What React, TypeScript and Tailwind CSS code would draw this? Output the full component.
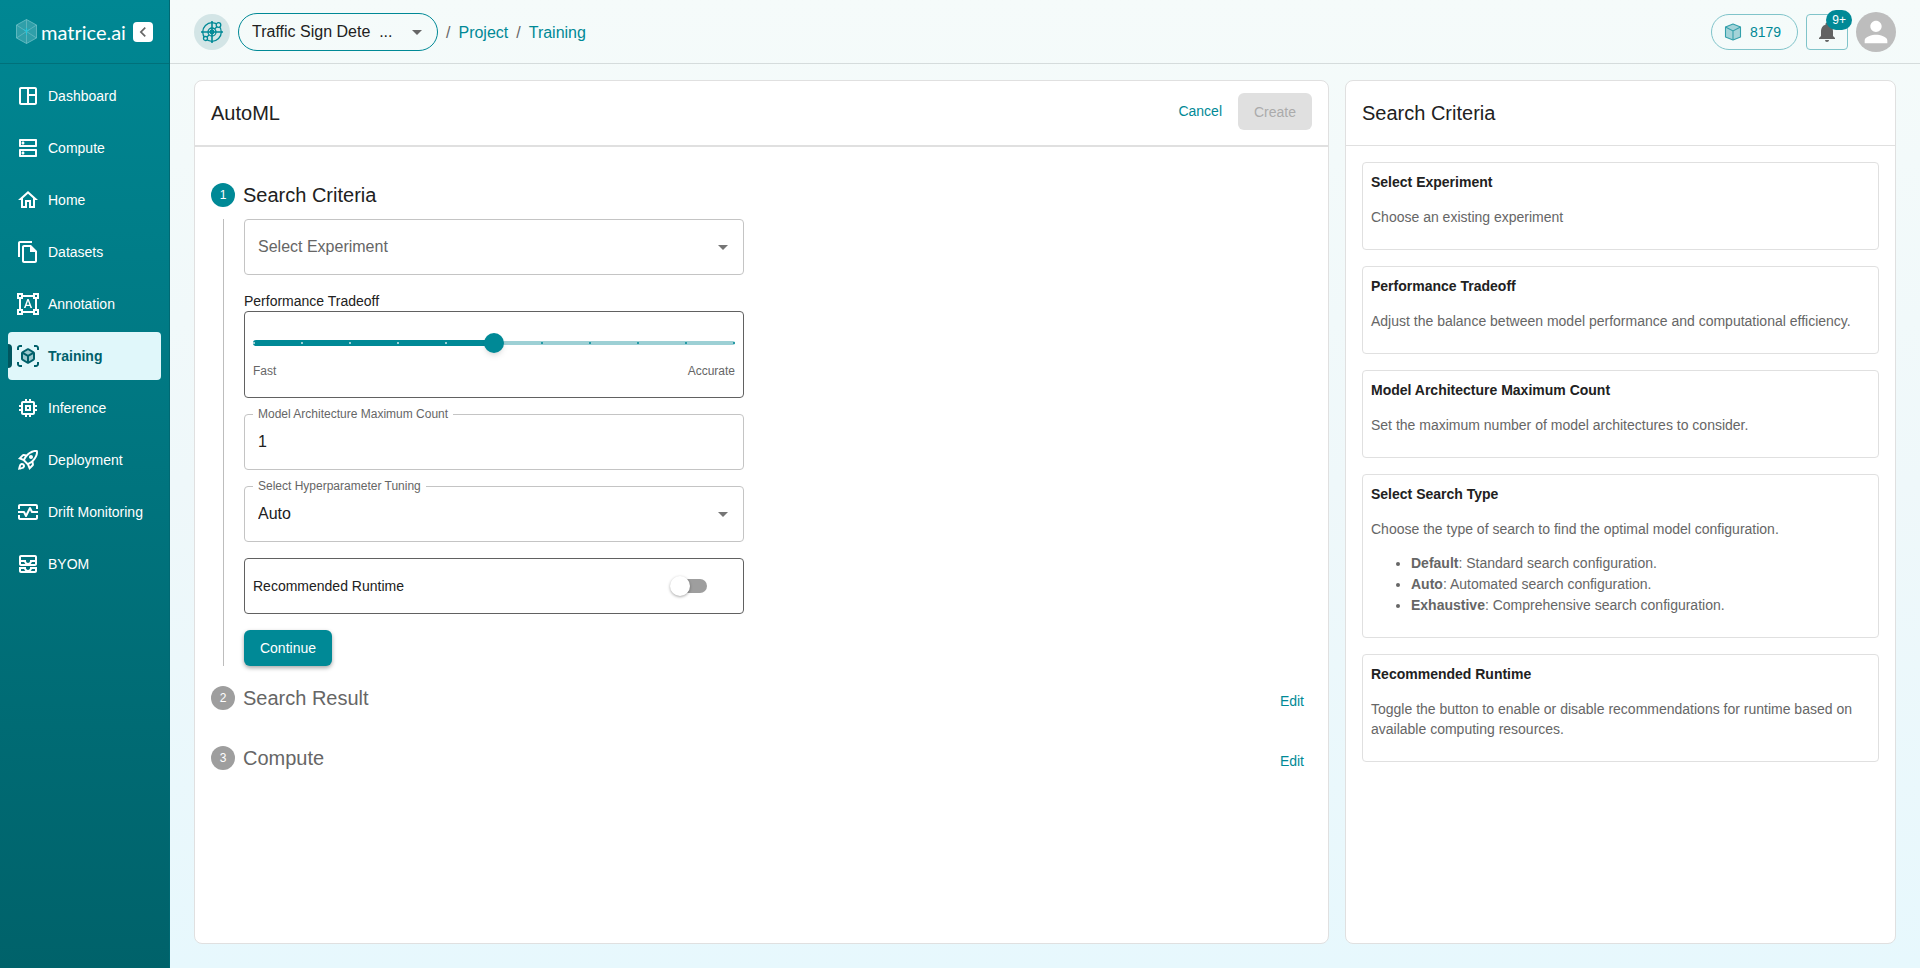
import React, { useState } from "react";
import {
  MdOutlineSpaceDashboard,
  MdOutlineDns,
  MdOutlineHome,
  MdOutlineFileCopy,
  MdOutlineFormatShapes,
  MdOutlineViewInAr,
  MdMemory,
  MdOutlineRocketLaunch,
  MdOutlineMonitorHeart,
  MdOutlineAllInbox,
  MdNotifications,
  MdChevronLeft,
  MdArrowDropDown,
  MdPerson,
} from "react-icons/md";

function LogoMark() {
  return (
    <svg width="21" height="25" viewBox="0 0 21 25" fill="none" className="shrink-0">
      <path d="M10.500 .5 20.500 6v13l-10 5.500L.5 19V6z" fill="#4fb0b9" fillOpacity=".6" stroke="#6fc0c7" strokeWidth=".8" />
      <path d="M.5 6 10.500 12.500 20.500 6M10.500 .5v24M.5 19l10-6.500 10 6.500" stroke="#a5d8dc" strokeOpacity=".55" strokeWidth=".7" />
      <path d="M10.500 9v7M7.500 10.500l3 2 3-2" stroke="#26c6da" strokeWidth="1" />
    </svg>
  );
}

function TargetIcon() {
  return (
    <svg width="22" height="22" viewBox="0 0 22 22" fill="none" stroke="#008996" strokeWidth="1.300">
      <circle cx="11" cy="11" r="9.300" />
      <circle cx="11" cy="11" r="4" />
      <circle cx="11" cy="11" r="1.800" />
      <path d="M11 0v22M0 11h22" strokeWidth="1.600" />
      <circle cx="17.500" cy="4" r="2.300" fill="#d3e7e8" />
      <circle cx="4.500" cy="17.500" r="2" fill="#d3e7e8" />
      <path d="M16 5.700 13.500 8M6 16l2-2" />
    </svg>
  );
}

function CubeIcon() {
  return (
    <svg width="18" height="18" viewBox="0 0 18 18" fill="none">
      <path d="M9 1 16.500 4v10L9 17 1.500 14V4z" fill="#a3d3d8" stroke="#33a0ab" strokeWidth="1.100" strokeLinejoin="round" />
      <path d="M1.500 4 9 8l7.500-4M9 8v9" stroke="#33a0ab" strokeWidth="1.100" />
    </svg>
  );
}

function TrainingIcon() {
  return (
    <span className="relative block size-6">
      <svg viewBox="0 0 24 24" className="absolute inset-0 size-6">
        <path d="M12 6l5 3v6l-5 3-5-3V9z" fill="#00606a" fillOpacity=".3" />
      </svg>
      <MdOutlineViewInAr className="relative size-6" />
    </span>
  );
}

const navItems = [
  { label: "Dashboard", icon: <MdOutlineSpaceDashboard className="size-6" /> },
  { label: "Compute", icon: <MdOutlineDns className="size-6" /> },
  { label: "Home", icon: <MdOutlineHome className="size-6" /> },
  { label: "Datasets", icon: <MdOutlineFileCopy className="size-6" /> },
  { label: "Annotation", icon: <MdOutlineFormatShapes className="size-6" /> },
  { label: "Training", icon: <TrainingIcon />, active: true },
  { label: "Inference", icon: <MdMemory className="size-6" /> },
  { label: "Deployment", icon: <MdOutlineRocketLaunch className="size-6" /> },
  { label: "Drift Monitoring", icon: <MdOutlineMonitorHeart className="size-6" /> },
  { label: "BYOM", icon: <MdOutlineAllInbox className="size-6" /> },
];

function Sidebar() {
  return (
    <aside className="flex w-[170px] shrink-0 flex-col border-r border-[#006973] bg-linear-to-b from-[#008793] to-[#00626a]">
      <div className="flex h-16 items-center border-b border-black/15 pl-4">
        <LogoMark />
        <span className="ml-1 w-[88px] font-['Lato',sans-serif] text-xl/6 text-white">matrice.ai</span>
        <button aria-label="Collapse menu" className="ml-1 flex size-5 items-center justify-center rounded bg-white text-[#666]">
          <MdChevronLeft className="size-5" />
        </button>
      </div>
      <nav className="flex flex-col gap-1 px-2 py-2">
        {navItems.map((item) => (
          <a
            key={item.label}
            href="#"
            className={
              item.active
                ? "relative flex h-12 items-center gap-2 rounded bg-[#e0f7fa] pl-2 text-sm font-bold text-[#00606a]"
                : "flex h-12 items-center gap-2 rounded pl-2 text-sm text-white"
            }
          >
            {item.active && <span className="absolute top-3 left-0 h-6 w-1 rounded-r bg-[#00565f]" />}
            {item.icon}
            <span className="whitespace-nowrap">{item.label}</span>
          </a>
        ))}
      </nav>
    </aside>
  );
}

function Header() {
  return (
    <header className="flex h-16 items-center justify-between border-b border-[#d5dcdc] px-6">
      <div className="flex items-center gap-2">
        <span className="flex size-9 items-center justify-center rounded-full bg-[#d3e5e6]">
          <TargetIcon />
        </span>
        <div className="relative">
          <select
            aria-label="Project"
            className="block h-[38px] w-[200px] appearance-none rounded-full border border-[#008996] bg-transparent pr-10 pl-[13px] text-base text-[#212121]"
          >
            <option>Traffic Sign Dete&nbsp; ...</option>
          </select>
          <MdArrowDropDown className="pointer-events-none absolute top-[7px] right-[9px] size-6 text-[#666]" />
        </div>
        <nav className="flex items-center gap-2 pt-0.5 text-base text-[#666]">
          <span>/</span>
          <a href="#" className="text-[#008996]">Project</a>
          <span>/</span>
          <a href="#" className="text-[#008996]">Training</a>
        </nav>
      </div>
      <div className="flex items-center gap-2">
        <button className="flex h-9 w-[87px] items-center gap-2 rounded-full border border-[#80c4ca] px-3 text-sm text-[#008996]">
          <CubeIcon />
          <span>8179</span>
        </button>
        <button aria-label="Notifications" className="relative flex h-9 w-[42px] items-center justify-center rounded border border-[#80c4ca] text-[#636363]">
          <MdNotifications className="size-6" />
          <span className="absolute -top-[5px] -right-[5px] flex h-5 items-center rounded-full bg-[#008996] px-1.5 text-xs text-white">9+</span>
        </button>
        <button aria-label="Account" className="flex size-10 items-center justify-center rounded-full bg-[#bdbdbd] text-white">
          <MdPerson className="size-[34px]" />
        </button>
      </div>
    </header>
  );
}

function StepTitle({ n, title, active }: { n: number; title: string; active?: boolean }) {
  return (
    <div className="flex h-8 items-center gap-2">
      <span
        className={
          active
            ? "flex size-6 items-center justify-center rounded-full bg-[#008996] text-xs text-white"
            : "flex size-6 items-center justify-center rounded-full bg-[#9e9e9e] text-xs text-white"
        }
      >
        {n}
      </span>
      <h3 className={active ? "text-xl text-[#212121]" : "text-xl text-[#666]"}>{title}</h3>
    </div>
  );
}

function PerformanceSlider() {
  const [value, setValue] = useState(5);
  return (
    <div className="relative flex h-5 items-center">
      <div className="absolute inset-x-0 h-1 rounded-full bg-[#9dd0d5]" />
      <div className="absolute left-0 h-1.5 rounded-full bg-[#008996]" style={{ width: `${value * 10}%` }} />
      <div className="absolute inset-x-0 flex justify-between">
        {Array.from({ length: 11 }, (_, i) => (
          <span key={i} className={i <= value ? "size-0.5 rounded-full bg-[#cfe9eb]" : "size-0.5 rounded-full bg-[#008996]"} />
        ))}
      </div>
      <input
        id="tradeoff"
        type="range"
        min={0}
        max={10}
        value={value}
        onChange={(e) => setValue(Number(e.target.value))}
        className="relative h-5 w-full appearance-none bg-transparent [&::-webkit-slider-thumb]:size-5 [&::-webkit-slider-thumb]:appearance-none [&::-webkit-slider-thumb]:rounded-full [&::-webkit-slider-thumb]:bg-[#008996] [&::-webkit-slider-thumb]:shadow-md"
      />
    </div>
  );
}

function SearchCriteriaForm() {
  const [runtime, setRuntime] = useState(false);
  return (
    <div className="mt-2 ml-3 border-l border-[#bdbdbd] pl-5">
      <div className="flex max-w-[500px] flex-col gap-4">
        <div className="relative">
          <select
            aria-label="Select Experiment"
            className="block h-14 w-full appearance-none rounded border border-[#c4c4c4] bg-white px-[13px] text-base text-[#666]"
          >
            <option>Select Experiment</option>
          </select>
          <MdArrowDropDown className="pointer-events-none absolute top-4 right-[9px] size-6 text-[#757575]" />
        </div>

        <div>
          <label htmlFor="tradeoff" className="block text-sm/5 text-[#212121]">Performance Tradeoff</label>
          <div className="h-[87px] rounded border border-[#616161] px-2 pt-[21px]">
            <PerformanceSlider />
            <div className="mt-2 flex justify-between text-xs/5 text-[#666]">
              <span>Fast</span>
              <span>Accurate</span>
            </div>
          </div>
        </div>

        <div className="relative">
          <label htmlFor="count" className="absolute -top-2 left-[9px] bg-white px-[5px] text-xs text-[#666]">
            Model Architecture Maximum Count
          </label>
          <input
            id="count"
            type="text"
            defaultValue="1"
            className="block h-14 w-full rounded border border-[#c4c4c4] px-[13px] text-base text-[#212121]"
          />
        </div>

        <div className="relative">
          <label htmlFor="tuning" className="absolute -top-2 left-[9px] bg-white px-[5px] text-xs text-[#666]">
            Select Hyperparameter Tuning
          </label>
          <select
            id="tuning"
            className="block h-14 w-full appearance-none rounded border border-[#c4c4c4] bg-white px-[13px] text-base text-[#212121]"
          >
            <option>Auto</option>
          </select>
          <MdArrowDropDown className="pointer-events-none absolute top-4 right-[9px] size-6 text-[#757575]" />
        </div>

        <div className="flex h-14 items-center justify-between rounded border border-[#616161] pr-9 pl-2">
          <label htmlFor="runtime" className="text-sm text-[#212121]">Recommended Runtime</label>
          <input
            id="runtime"
            type="checkbox"
            role="switch"
            checked={runtime}
            onChange={(e) => setRuntime(e.target.checked)}
            className="relative h-3.5 w-[34px] appearance-none rounded-full bg-[#9e9e9e] before:absolute before:-top-[3px] before:-left-[3px] before:size-5 before:rounded-full before:bg-white before:shadow-[0_1px_3px_rgba(0,0,0,0.35)] before:content-[''] checked:bg-[#80c4ca] checked:before:left-[17px] checked:before:bg-[#008996]"
          />
        </div>

        <button className="h-9 w-[88px] rounded-md bg-[#008996] text-sm text-white shadow-[0_2px_4px_rgba(0,0,0,0.35)]">Continue</button>
      </div>
    </div>
  );
}

function HelpCard({ title, text, children }: { title: string; text: string; children?: React.ReactNode }) {
  return (
    <section className="rounded border border-[#e0e0e0] p-2 text-sm/5 text-[#666]">
      <h3 className="text-sm/[22px] font-bold text-[#212121]">{title}</h3>
      <p className="my-3.5">{text}</p>
      {children}
    </section>
  );
}

export default function App() {
  return (
    <div className="flex min-h-screen bg-linear-to-b from-[#f5fbfa] via-[#eff8fa] to-[#e7f8fd] font-['Liberation_Sans',Arial,sans-serif]">
      <Sidebar />
      <div className="flex min-w-0 flex-1 flex-col">
        <Header />
        <main className="grid flex-1 grid-cols-[1135fr_551fr] gap-4 px-6 pt-4 pb-6">
          <section className="rounded-lg border border-[#e0e0e0] bg-white">
            <div className="flex h-[66px] items-start justify-between border-b-2 border-[#e0e0e0] px-4">
              <h2 className="text-xl/[64px] text-[#212121]">AutoML</h2>
              <div className="mt-3 flex items-start gap-4">
                <button className="h-9 text-sm text-[#008996]">Cancel</button>
                <button disabled className="h-[37px] w-[74px] rounded-md bg-[#e0e0e0] text-sm text-[#ababab]">Create</button>
              </div>
            </div>
            <div className="px-4 pt-8 pb-6">
              <StepTitle n={1} title="Search Criteria" active />
              <SearchCriteriaForm />
              <div className="mt-4 flex items-start justify-between">
                <StepTitle n={2} title="Search Result" />
                <button className="h-[38px] px-2 text-sm text-[#008996]">Edit</button>
              </div>
              <div className="mt-[22px] flex items-start justify-between">
                <StepTitle n={3} title="Compute" />
                <button className="h-[38px] px-2 text-sm text-[#008996]">Edit</button>
              </div>
            </div>
          </section>

          <aside className="rounded-lg border border-[#e0e0e0] bg-white">
            <h2 className="h-[65px] border-b border-[#e0e0e0] px-4 text-xl/[64px] text-[#212121]">Search Criteria</h2>
            <div className="flex flex-col gap-4 p-4">
              <HelpCard title="Select Experiment" text="Choose an existing experiment" />
              <HelpCard
                title="Performance Tradeoff"
                text="Adjust the balance between model performance and computational efficiency."
              />
              <HelpCard
                title="Model Architecture Maximum Count"
                text="Set the maximum number of model architectures to consider."
              />
              <HelpCard
                title="Select Search Type"
                text="Choose the type of search to find the optimal model configuration."
              >
                <ul className="mb-[13px] list-disc pl-10 leading-[21px]">
                  <li><strong>Default</strong>: Standard search configuration.</li>
                  <li><strong>Auto</strong>: Automated search configuration.</li>
                  <li><strong>Exhaustive</strong>: Comprehensive search configuration.</li>
                </ul>
              </HelpCard>
              <HelpCard
                title="Recommended Runtime"
                text="Toggle the button to enable or disable recommendations for runtime based on available computing resources."
              />
            </div>
          </aside>
        </main>
      </div>
    </div>
  );
}
